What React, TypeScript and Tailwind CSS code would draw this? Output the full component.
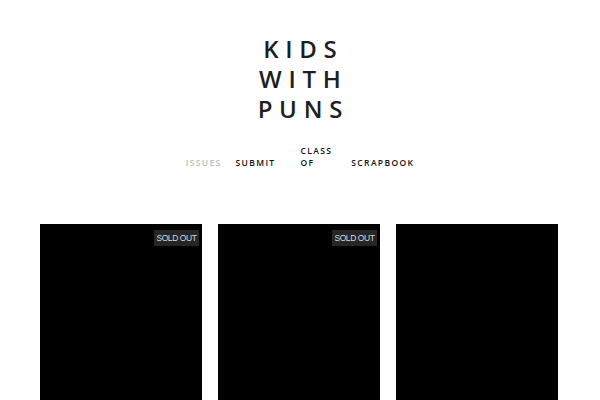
import React from "react";

const Card = ({ sold }: { sold: boolean }) => (
  <div className="relative bg-black h-[240px]">
    {sold && (
      <div
        className="absolute top-[6px] right-[3px] bg-[#262626] text-[#d8d8d8] text-[8.5px] leading-none px-[2.5px] py-[3.5px] tracking-[-0.05em]"
        style={{ fontFamily: '"Liberation Sans", sans-serif' }}
      >
        SOLD OUT
      </div>
    )}
  </div>
);

export default function App() {
  return (
    <div className="w-[600px] h-[400px] overflow-hidden bg-white" style={{ fontFamily: '"Open Sans", sans-serif' }}>
      <div className="flex flex-col items-center pt-[34px]">
        <div className="text-[24px] leading-[30px] font-semibold tracking-[0.28em] text-[#1e1e1e] text-center pl-[0.28em]">
          <div>KIDS</div>
          <div>WITH</div>
          <div>PUNS</div>
        </div>
      </div>
      <nav className="flex justify-center items-end mt-[21px] text-[8.5px] font-semibold tracking-[0.16em] leading-[12px]">
        <span className="text-[#bdbdbd]">ISSUES</span>
        <span className="ml-[14px] text-[#111]">SUBMIT</span>
        <span className="ml-[25px] text-[#111] flex flex-col">
          <span>CLASS</span>
          <span>OF</span>
        </span>
        <span className="ml-[19px] text-[#111]">SCRAPBOOK</span>
      </nav>
      <div className="grid grid-cols-3 gap-[16px] pl-[40px] pr-[42px] mt-[55px]">
        <Card sold />
        <Card sold />
        <Card sold={false} />
      </div>
    </div>
  );
}
